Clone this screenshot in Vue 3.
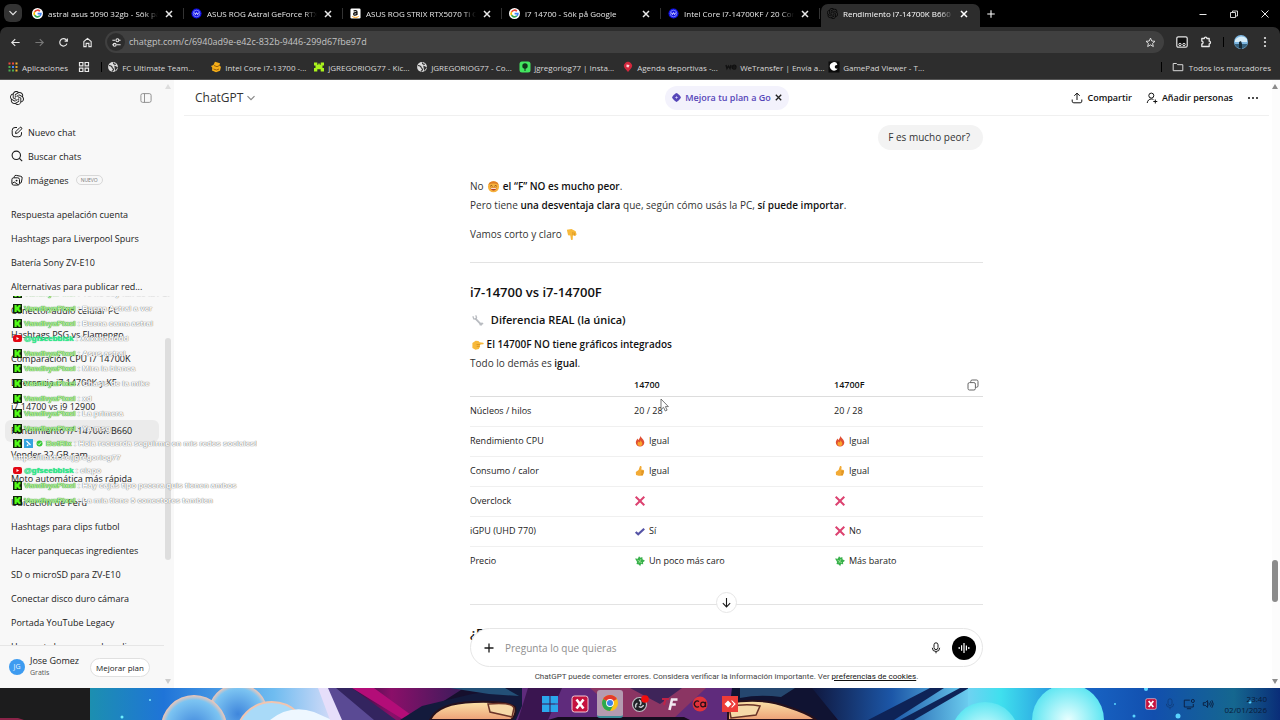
<script setup>
import { ref } from 'vue'

const tabs = [
  { icon: 'google', title: 'astral asus 5090 32gb - Sök på G' },
  { icon: 'webhallen', title: 'ASUS ROG Astral GeForce RTX 5' },
  { icon: 'amazon', title: 'ASUS ROG STRIX RTX5070 Ti OC' },
  { icon: 'google', title: 'i7 14700 - Sök på Google' },
  { icon: 'webhallen', title: 'Intel Core i7-14700KF / 20 Cores' },
  { icon: 'openai', title: 'Rendimiento i7-14700K B660', active: true }
]

const bookmarks = [
  { icon: 'globe', label: 'FC Ultimate Team...' },
  { icon: 'honey', label: 'Intel Core i7-13700 -...' },
  { icon: 'kick', label: 'jGREGORIOG77 - Kic...' },
  { icon: 'globe', label: 'JGREGORIOG77 - Co...' },
  { icon: 'tree', label: 'jgregoriog77 | Insta...' },
  { icon: 'pin', label: 'Agenda deportivas -...' },
  { icon: 'we', label: 'WeTransfer | Envía a...' },
  { icon: 'gamepad', label: 'GamePad Viewer - T...' }
]

const chats = [
  'Respuesta apelación cuenta',
  'Hashtags para Liverpool Spurs',
  'Batería Sony ZV-E10',
  'Alternativas para publicar red...',
  'Conector audio celular PC',
  'Hashtags PSG vs Flamengo',
  'Comparación CPU i7 14700K',
  'Diferencia i7 14700K y KF',
  'i7 14700 vs i9 12900',
  'Rendimiento i7-14700K B660',
  'Vender 32 GB ram',
  'Moto automática más rápida',
  'Ubicación de Perú',
  'Hashtags para clips futbol',
  'Hacer panquecas ingredientes',
  'SD o microSD para ZV-E10',
  'Conectar disco duro cámara',
  'Portada YouTube Legacy',
  'Hogwarts Legacy modo online'
]
const current = 9

const stream = [
  { from: 'kick', name: 'VandhyaPixel', text: 'Yo no soy fan de la PSF' },
  { from: 'kick', name: 'VandhyaPixel', text: 'Buena Astral a ver' },
  { from: 'kick', name: 'VandhyaPixel', text: 'Buena cama astral' },
  { from: 'youtube', name: '@gfseebblsk', text: 'Xxxxdddddd' },
  { from: 'kick', name: 'VandhyaPixel', text: 'Asus astral' },
  { from: 'kick', name: 'VandhyaPixel', text: 'Mira la blanca' },
  { from: 'kick', name: 'VandhyaPixel', text: 'Chasis de la mike' },
  { from: 'kick', name: 'VandhyaPixel', text: 'xd' },
  { from: 'kick', name: 'VandhyaPixel', text: 'La primera' },
  { from: 'kick', name: 'VandhyaPixel', text: 'Ya msg' },
  { from: 'kick', bot: true, name: 'BotRix', text: 'Hola recuerda seguirme en mis redes sociales!' },
  { text: 'https://linktr.ee/jgregoriog77' },
  { from: 'youtube', name: '@gfseebblsk', text: 'elapo' },
  { from: 'kick', name: 'VandhyaPixel', text: 'Hay cajas tipo pecera quis tienen ambos' },
  { from: 'kick', name: 'VandhyaPixel', text: 'La mia tiene 5 conectores tambien' }
]

const rows = [
  { label: 'Núcleos / hilos', a: { text: '20 / 28' }, b: { text: '20 / 28' } },
  { label: 'Rendimiento CPU', a: { icon: 'fire', text: 'Igual' }, b: { icon: 'fire', text: 'Igual' } },
  { label: 'Consumo / calor', a: { icon: 'thumb', text: 'Igual' }, b: { icon: 'thumb', text: 'Igual' } },
  { label: 'Overclock', a: { icon: 'cross' }, b: { icon: 'cross' } },
  { label: 'iGPU (UHD 770)', a: { icon: 'tick', text: 'Sí' }, b: { icon: 'cross', text: 'No' } },
  { label: 'Precio', a: { icon: 'money', text: 'Un poco más caro' }, b: { icon: 'money', text: 'Más barato' } }
]

const apps = ['windows', 'xsplit', 'chrome', 'obs', 'tf', 'ca', 'anydesk']

const address = ref('chatgpt.com/c/6940ad9e-e42c-832b-9446-299d67fbe97d')
const prompt = ref('')
</script>

<template>
  <div class="screen">
    <svg class="sprite" aria-hidden="true">
      <symbol id="google" viewBox="0 0 12 12">
        <circle cx="6" cy="6" r="6" fill="#fff" />
        <g fill="none" stroke-width="1.8">
          <path d="M8.6 3.5A3.7 3.7 0 0 0 2.8 4.2" stroke="#ea4335" />
          <path d="M2.8 4.2a3.7 3.7 0 0 0 0 3.6" stroke="#fbbc05" />
          <path d="M2.8 7.8a3.7 3.7 0 0 0 5.7.9" stroke="#34a853" />
          <path d="M8.5 8.7A3.7 3.7 0 0 0 9.7 6.2H6.1" stroke="#4285f4" />
        </g>
      </symbol>
      <symbol id="webhallen" viewBox="0 0 12 12">
        <circle cx="6" cy="6" r="5.5" fill="#1414e6" />
        <circle cx="6" cy="6" r="3.6" fill="none" stroke="#a9b4ff" stroke-width=".7" />
        <path d="M3.8 5l1 2.2L6 5l1.2 2.2L8.3 5" fill="none" stroke="#fff" stroke-width=".9" />
      </symbol>
      <symbol id="amazon" viewBox="0 0 12 12">
        <rect x=".5" y=".5" width="11" height="11" rx="1.5" fill="#fff" />
        <path d="M4 3.6c.7-1.2 3.6-1.1 3.6.6v3.4M7.5 4.9C5.5 4.9 4 5.2 4 6.6c0 1.7 2.6 1.5 3.5 0" fill="none" stroke="#111" stroke-width="1.4" />
        <path d="M2.5 9.2c2 1.5 5 1.5 7 0" fill="none" stroke="#f90" stroke-width="1" />
      </symbol>
      <symbol id="openai" viewBox="0 0 24 24">
        <path fill="currentColor" d="M22.28 9.82a5.98 5.98 0 0 0-.52-4.91 6.05 6.05 0 0 0-6.51-2.9A6.07 6.07 0 0 0 4.98 4.18a5.98 5.98 0 0 0-4 2.9 6.05 6.05 0 0 0 .74 7.1 5.98 5.98 0 0 0 .51 4.91 6.05 6.05 0 0 0 6.52 2.9A5.98 5.98 0 0 0 13.26 24a6.06 6.06 0 0 0 5.77-4.21 5.99 5.99 0 0 0 4-2.9 6.06 6.06 0 0 0-.75-7.07zm-9.02 12.61a4.48 4.48 0 0 1-2.88-1.04l.14-.08 4.78-2.76a.8.8 0 0 0 .39-.68v-6.74l2.02 1.17a.07.07 0 0 1 .04.05v5.58a4.5 4.5 0 0 1-4.49 4.5zM3.6 18.3a4.47 4.47 0 0 1-.54-3.01l.15.08 4.78 2.76a.77.77 0 0 0 .78 0l5.84-3.37v2.33a.08.08 0 0 1-.03.06L9.74 19.95a4.5 4.5 0 0 1-6.14-1.65zM2.34 7.9a4.49 4.49 0 0 1 2.37-1.97v5.68a.77.77 0 0 0 .39.67l5.81 3.35-2.02 1.17a.08.08 0 0 1-.07 0l-4.83-2.78A4.5 4.5 0 0 1 2.34 7.9zm16.6 3.86l-5.84-3.39 2.02-1.16a.08.08 0 0 1 .07 0l4.83 2.79a4.49 4.49 0 0 1-.68 8.1v-5.68a.79.79 0 0 0-.4-.66zm2.01-3.02l-.14-.09-4.77-2.78a.78.78 0 0 0-.79 0L9.41 9.23V6.9a.07.07 0 0 1 .03-.06l4.83-2.79a4.5 4.5 0 0 1 6.68 4.66zM8.31 12.86l-2.02-1.16a.08.08 0 0 1-.04-.06V6.07a4.5 4.5 0 0 1 7.38-3.45l-.14.08-4.78 2.76a.8.8 0 0 0-.39.68zm1.1-2.37L12 9l2.61 1.5v3L12 15l-2.6-1.5z" />
      </symbol>
      <symbol id="close" viewBox="0 0 10 10"><path d="M2 2l6 6M8 2l-6 6" fill="none" stroke="currentColor" stroke-width="1.5" /></symbol>
      <symbol id="plus" viewBox="0 0 12 12"><path d="M6 1.5v9M1.500 6h9" fill="none" stroke="currentColor" stroke-width="1.3" /></symbol>
      <symbol id="down" viewBox="0 0 10 10"><path d="M1.5 3.2L5 6.7l3.5-3.5" fill="none" stroke="currentColor" stroke-width="1.2" /></symbol>
      <symbol id="min" viewBox="0 0 10 10"><path d="M1.5 5.5h7" stroke="currentColor" /></symbol>
      <symbol id="restore" viewBox="0 0 10 10"><path d="M1.5 3.5h5v5h-5zM3.5 3.5v-1.5h5v5H6.5" fill="none" stroke="currentColor" stroke-width=".9" stroke-linejoin="round" /></symbol>
      <symbol id="quit" viewBox="0 0 10 10"><path d="M1.5 1.5l7 7M8.5 1.5l-7 7" stroke="currentColor" /></symbol>
      <symbol id="back" viewBox="0 0 12 12"><path d="M10.5 6H2M5.7 2.2L1.9 6l3.8 3.8" fill="none" stroke="currentColor" stroke-width="1.2" /></symbol>
      <symbol id="forward" viewBox="0 0 12 12"><path d="M1.5 6H10M6.3 2.2L10.1 6 6.3 9.8" fill="none" stroke="currentColor" stroke-width="1.2" /></symbol>
      <symbol id="reload" viewBox="0 0 12 12"><path d="M9.7 7.2A4 4 0 1 1 8.9 3.2L10 4.4M10.2 1.5v3H7.2" fill="none" stroke="currentColor" stroke-width="1.3" /></symbol>
      <symbol id="home" viewBox="0 0 12 12"><path d="M2 10.5V5L6 1.5 10 5v5.5H7.5v-3.5h-3v3.5z" fill="none" stroke="currentColor" stroke-width="1.2" /></symbol>
      <symbol id="tune" viewBox="0 0 12 12"><path d="M1.5 3.5h3M6 8.5h4.5M8.5 3.5h2M1.5 8.5h2" stroke="currentColor" stroke-width="1.2" /><circle cx="7" cy="3.5" r="1.6" fill="none" stroke="currentColor" stroke-width="1.2" /><circle cx="4" cy="8.5" r="1.6" fill="none" stroke="currentColor" stroke-width="1.2" /></symbol>
      <symbol id="star" viewBox="0 0 12 12"><path d="M6 1.2l1.4 3.2 3.5.3-2.6 2.3.8 3.4L6 8.600l-3.100 1.800.8-3.400L1.100 4.700l3.500-.3z" fill="none" stroke="currentColor" /></symbol>
      <symbol id="mask" viewBox="0 0 12 12"><rect x=".8" y=".8" width="10.4" height="10.4" rx="1.5" fill="#111" stroke="currentColor" stroke-width="1.2" /><circle cx="4" cy="8.500" r="1.200" fill="none" stroke="currentColor" /><circle cx="8" cy="8.500" r="1.200" fill="none" stroke="currentColor" /></symbol>
      <symbol id="puzzle" viewBox="0 0 12 12"><path d="M1.8 2.500h2.500a1.300 1.300 0 0 1 2.600 0h2.300v2.700a1.300 1.300 0 0 1 0 2.600v2.700H1.800V7.800a1.300 1.300 0 0 0 0-2.600z" fill="none" stroke="currentColor" stroke-width="1.3" stroke-linejoin="round" /></symbol>
      <symbol id="avatar" viewBox="0 0 14 14"><circle cx="7" cy="7" r="7" fill="#7db7e2" /><path d="M1 5c3-4 8-5 12-1v3H1z" fill="#d6edf9" /><path d="M.5 9h13a7 7 0 0 1-13 0z" fill="#36617d" /><path d="M5 13V7l2-1 1 3v5z" fill="#162935" /></symbol>
      <symbol id="kebab" viewBox="0 0 12 12"><g fill="currentColor"><circle cx="6" cy="2" r="1.1" /><circle cx="6" cy="6" r="1.1" /><circle cx="6" cy="10" r="1.1" /></g></symbol>
      <symbol id="apps" viewBox="0 0 12 12"><path d="M1.5 1.5h2v2h-2zM5 1.5h2v2H5z" fill="#ef4c3c" /><path d="M8.5 1.5h2v2h-2zM8.5 8.5h2v2h-2z" fill="#f3b32c" /><path d="M1.5 5h2v2h-2zM1.5 8.5h2v2h-2z" fill="#4caf50" /><path d="M5 5h2v2H5z" fill="#448aff" /><path d="M8.5 5h2v2h-2z" fill="#e5a629" /><path d="M5 8.5h2v2H5z" fill="#4caf50" /></symbol>
      <symbol id="grid" viewBox="0 0 12 12"><path d="M1.5 1.5h3.4v3.4H1.5zM7.100 1.5h3.4v3.4H7.100zM1.5 7.100h3.4v3.4H1.5zM7.100 7.100h3.4v3.4H7.100z" fill="none" stroke="currentColor" stroke-width="1.2" /></symbol>
      <symbol id="globe" viewBox="0 0 12 12"><circle cx="6" cy="6" r="4.9" fill="#ddd" /><path d="M2 4.5c2 .2 3 .8 3.2 2 .2 1 1.300.8 1.300 2 0 .9-.9 1.300-1.600 1.900M6.500 1.500c-.2 1.500 1 2 2.300 1.700M8 5.500l2 1-1.500 2z" fill="none" stroke="#333" stroke-width="1.2" /></symbol>
      <symbol id="honey" viewBox="0 0 12 12"><path d="M5 .8l5 1.400-.7 2.500 1.700 1-1 4-4 1.500-4-1.800.3-2.600L1 5l2.400-1z" fill="#f5ae19" /><path d="M4 4.500l3 1.200 2-1M3.500 8l3 1 2.500-1" fill="none" stroke="#9c6108" /></symbol>
      <symbol id="kick" viewBox="0 0 12 12"><path d="M1 1.5h3.300v2.200h1V2.500h1.400v1.200h1V1.500H11v3H9.500v2.600H11v3.400H7.700V8.300H4.300v2.200H1V7.100h1.500V4.500H1z" fill="#a9f21c" /></symbol>
      <symbol id="tree" viewBox="0 0 12 12"><rect x=".5" y=".5" width="11" height="11" rx="2.5" fill="#43e660" /><circle cx="6" cy="5" r="2.7" fill="#10351b" /><path d="M5.500 6.500h1v3.500h-1z" fill="#10351b" /></symbol>
      <symbol id="pin" viewBox="0 0 12 12"><path d="M6 11L3 7.500a4 4 0 1 1 6 0z" fill="#d2283d" /><path d="M4.500 3.500l3 .5-1 2.500-2-.5z" fill="#ffd5db" /></symbol>
      <symbol id="we" viewBox="0 0 12 12"><path d="M1 4l1 3.500L3.500 5 5 7.500 6 4M7 6h4c0-3-4-2-4 .3 0 2 3 2.200 4 .9" fill="none" stroke="#111" stroke-width="1.4" /></symbol>
      <symbol id="gamepad" viewBox="0 0 12 12"><rect x=".5" y=".5" width="11" height="11" fill="#0b0b0b" /><path d="M8.500 1.800a4.300 4.300 0 1 0 1.300 5.700c-1.500.5-3-.1-3-1.500s.9-2.200 2.600-2z" fill="#fff" /></symbol>
      <symbol id="folder" viewBox="0 0 12 12"><path d="M1.200 2.500h3.300l1.200 1.200h5.100v6H1.200z" fill="none" stroke="currentColor" /></symbol>
      <symbol id="panel" viewBox="0 0 12 12"><rect x=".9" y="1.600" width="10.200" height="8.800" rx="1.800" fill="none" stroke="currentColor" stroke-width=".9" /><path d="M4.500 1.600v8.800" stroke="currentColor" stroke-width=".9" /></symbol>
      <symbol id="edit" viewBox="0 0 12 12"><path d="M6 1.500H4A2.800 2.800 0 0 0 1.200 4.300V8A2.800 2.800 0 0 0 4 10.800h3.700A2.800 2.800 0 0 0 10.500 8V6.200M4.500 7.500l.4-2L9 1.400a1.150 1.150 0 0 1 1.600 1.600L6.500 7.100z" fill="none" stroke="currentColor" stroke-linejoin="round" /></symbol>
      <symbol id="search" viewBox="0 0 12 12"><circle cx="5.300" cy="5.300" r="4.200" fill="none" stroke="currentColor" stroke-width="1.100" /><path d="M8.400 8.400l2.800 2.800" stroke="currentColor" stroke-width="1.100" /></symbol>
      <symbol id="images" viewBox="0 0 12 12"><rect x=".9" y="3.800" width="7.600" height="7.300" rx="1.800" fill="none" stroke="currentColor" /><path d="M3 3.700l.3-1A1.700 1.700 0 0 1 5.400 1.400l4.400.9a1.700 1.700 0 0 1 1.300 2.100L10.400 8a1.600 1.600 0 0 1-1.800 1.300M1.200 9.500l2-1.500 4 2.700M6 6.500h.2" fill="none" stroke="currentColor" /><circle cx="5.500" cy="6.600" r=".9" fill="currentColor" /></symbol>
      <symbol id="share" viewBox="0 0 12 12"><path d="M6 8V1.200M3.300 3.800L6 1.100l2.700 2.700M1.200 7.500v1.700a1.600 1.600 0 0 0 1.600 1.600h6.400a1.600 1.600 0 0 0 1.600-1.600V7.500" fill="none" stroke="currentColor" /></symbol>
      <symbol id="person" viewBox="0 0 12 12"><circle cx="5.300" cy="3.600" r="2.500" fill="none" stroke="currentColor" /><path d="M1.200 11c.4-2.600 2-4 4.100-4 .8 0 1.500.2 2.100.5M9.300 7.500v4M7.300 9.500h4" fill="none" stroke="currentColor" /></symbol>
      <symbol id="more" viewBox="0 0 12 12"><g fill="currentColor"><circle cx="2" cy="6" r="1" /><circle cx="6" cy="6" r="1" /><circle cx="10" cy="6" r="1" /></g></symbol>
      <symbol id="gem" viewBox="0 0 12 12"><path d="M6 1.200c1 0 4.800 3.800 4.800 4.800S7 10.800 6 10.800 1.200 7 1.200 6 5 1.200 6 1.200z" fill="#5646b8" /><path d="M6 4l.5 1.500L8 6l-1.500.5L6 8l-.5-1.500L4 6l1.500-.5z" fill="#d8d2ff" /></symbol>
      <symbol id="copy" viewBox="0 0 12 12"><rect x="1" y="3.600" width="7.400" height="7.400" rx="1.500" fill="none" stroke="currentColor" /><path d="M3.700 3.500V2.500A1.500 1.500 0 0 1 5.200 1h4.300A1.500 1.500 0 0 1 11 2.500v4.300a1.500 1.500 0 0 1-1.500 1.500h-1" fill="none" stroke="currentColor" /></symbol>
      <symbol id="arrow" viewBox="0 0 12 12"><path d="M6 1.200v9.400M2 6.800l4 4 4-4" fill="none" stroke="currentColor" stroke-width="1.200" /></symbol>
      <symbol id="mic" viewBox="0 0 12 12"><rect x="4" y=".8" width="4" height="6.800" rx="2" fill="none" stroke="currentColor" /><path d="M2.300 5.800a3.700 3.700 0 0 0 7.400 0M6 9.500v1.800" fill="none" stroke="currentColor" /></symbol>
      <symbol id="wave" viewBox="0 0 12 12"><path d="M1.200 5v2M3.600 3.200v5.600M6 1v10M8.400 3.500v5M10.800 5v2" stroke="currentColor" stroke-width="1.200" /></symbol>

      <symbol id="grin" viewBox="0 0 14 14"><circle cx="7" cy="7.300" r="6" fill="#f6b13c" /><path d="M1.500 5C3 .3 11 .3 12.500 5 9 3.500 5 3.500 1.500 5z" fill="#e07f24" /><path d="M3.500 6.700q1.200-1.400 2.400 0M8.100 6.700q1.200-1.400 2.400 0" fill="none" stroke="#7c3d10" /><path d="M3.800 8.400h6.400q-.5 3-3.200 3t-3.200-3z" fill="#b43c28" /><path d="M4.400 8.600h5.200v1H4.400z" fill="#fff0e0" /></symbol>
      <symbol id="pointdown" viewBox="0 0 14 14"><path d="M2 2l5-.8 4.500 2.300 1 3.500-1.500 1.500-2.500-.7-.2 4.500q-1 1.200-1.900 0L5.700 8 3.300 7.800z" fill="#f7b93b" /><path d="M8.500 4.300v3.500M10.300 5v3" stroke="#d28b1d" stroke-width=".7" /></symbol>
      <symbol id="pointright" viewBox="0 0 14 14"><path d="M1.500 5.500L5 3l3 .1 1.200 1.400 4 .5q1 .9 0 1.700l-3.700.4.3 2-1.400 2.800-3.600.7-3.300-1.800z" fill="#f7b93b" /><path d="M6 7h4M6.200 9h3" stroke="#d28b1d" stroke-width=".8" /></symbol>
      <symbol id="wrench" viewBox="0 0 14 14"><path d="M4.800 5L11 11.500" stroke="#b9bcc1" stroke-width="2" stroke-linecap="round" /><path d="M2 2.500l1 2.800 2.300.2.700-2L5 1.500M9.800 12.200l.2-2 2-.4 1 1.200" fill="none" stroke="#b9bcc1" stroke-width="1.400" /></symbol>
      <symbol id="fire" viewBox="0 0 12 12"><path d="M6.500.8c.2 2 3.800 3.700 3.800 6.900A4 4 0 0 1 6 11.500a4 4 0 0 1-4.200-4c0-2 1.200-3 1.700-4 .4.800.6 1.200 1 1.600.8-1.500 1.800-2.500 2-4.300z" fill="#df4f33" /><path d="M6.500 5c.3 1.500 1.800 2 1.800 3.700C8.300 10.400 7.300 11 6 11s-2.500-.8-2.500-2.200c0-1.100.7-1.700 1.100-2.200.4.500.5.800.9 1C6.100 6.900 6.500 6 6.500 5z" fill="#f9a52c" /></symbol>
      <symbol id="thumb" viewBox="0 0 12 12"><path d="M1.800 7L4.600 5 6 1q1.600-.4 1.600 1.200L7.300 4.600l2.300.3q.9.600.4 1.500.4.900-.2 1.400.2.900-.5 1.300 0 1.400-1 1.700H4.600L2 9.900z" fill="#f2aa35" /><path d="M7.300 6.300h2.300M7.300 7.900h2.100M7.200 9.400h1.800" stroke="#c67b16" stroke-width=".6" /></symbol>
      <symbol id="cross" viewBox="0 0 12 12"><path d="M1.700 1.700l8.600 8.600M10.300 1.700l-8.600 8.600" stroke="#dc4270" stroke-width="2" /></symbol>
      <symbol id="tick" viewBox="0 0 12 12"><path d="M1.700 7l2.500 2.300 6-5.500" fill="none" stroke="#5553a5" stroke-width="2.200" /></symbol>
      <symbol id="money" viewBox="0 0 12 12"><path d="M1 3.500l2.800.2L5 1.200l1.500 1.500L8.300 2l.2 2.200L11 5.800 9 7.200l.2 2L7 9l-.8 2.300L4.800 9.500 2.500 9l.6-2z" fill="#36b04a" /><path d="M3.500 5l4.500 3M7 4L5 7.800" stroke="#a8e59d" stroke-width=".8" /></symbol>

      <symbol id="kickbadge" viewBox="0 0 9 9"><rect width="9" height="9" fill="#10240b" /><path d="M1.500 1h2.200v1.700h.9V1.800h.9V1h2v2.200h-1v2.600h1V8h-2V7h-.9V6.200h-.9V8H1.500z" fill="#53fc18" /></symbol>
      <symbol id="youtubebadge" viewBox="0 0 9 9"><rect y="1" width="9" height="7" rx="2" fill="#e30613" /><path d="M3.500 3v3l2.600-1.500z" fill="#fff" /></symbol>
      <symbol id="modbadge" viewBox="0 0 9 9"><rect width="9" height="9" fill="#35a3df" /><path d="M2.500 2l4 4M3 6.800l1.300-1.300" stroke="#fff" stroke-width="1.200" /></symbol>
      <symbol id="okbadge" viewBox="0 0 9 9"><circle cx="4.500" cy="4.500" r="3" fill="#37c837" /><path d="M3 4.600l1.100 1.100 2-2.400" fill="none" stroke="#fff" stroke-width=".9" /></symbol>

      <symbol id="windows" viewBox="0 0 18 18"><path d="M1 1h7.500v7.500H1zM9.500 1H17v7.500H9.500zM1 9.500h7.500V17H1zM9.500 9.500H17V17H9.500z" fill="#2ba7ec" /></symbol>
      <symbol id="xsplit" viewBox="0 0 18 18"><rect x="1" y="1" width="16" height="16" rx="2.500" fill="#c5123f" stroke="#f2c9d3" /><path d="M5.500 4.500l7 9M12.500 4.500l-7 9" stroke="#fff" stroke-width="2.600" /></symbol>
      <symbol id="chrome" viewBox="0 0 18 18"><circle cx="9" cy="9" r="8" fill="#fbc116" /><path d="M9 9L2.100 5A8 8 0 0 1 15.900 5z" fill="#e33b2e" /><path d="M9 9L2.100 5A8 8 0 0 0 9 17l3.500-6z" fill="#2da94f" /><circle cx="9" cy="9" r="3.900" fill="#fff" /><circle cx="9" cy="9" r="3" fill="#3b82ea" /></symbol>
      <symbol id="obs" viewBox="0 0 18 18"><circle cx="8.500" cy="9.500" r="7" fill="#202126" stroke="#bdbdc4" stroke-width="1.200" /><path d="M8 5a3 3 0 0 1 1 5M12.500 10a3 3 0 0 1-4.700 1.500M5 12.500a3 3 0 0 1 1.400-4.300" fill="none" stroke="#c8c8cf" stroke-width="1.500" /><circle cx="14" cy="4" r="3.800" fill="#f20d0d" /></symbol>
      <symbol id="tf" viewBox="0 0 18 18"><path d="M1 4h7M4.500 4L3 10" stroke="#bf2347" stroke-width="2" /><path d="M8.500 15L11 4.500h5.500M9.800 9.500h5" fill="none" stroke="#f2e9f1" stroke-width="2.600" /></symbol>
      <symbol id="ca" viewBox="0 0 18 18"><circle cx="9" cy="9" r="7.500" fill="#e1333b" /><path d="M8 6.500a3 3 0 1 0 0 5" fill="none" stroke="#281018" stroke-width="1.300" /><circle cx="12" cy="9.500" r="2.300" fill="none" stroke="#281018" stroke-width="1.200" /><path d="M14.600 6.800v5.300" stroke="#281018" stroke-width="1.200" /></symbol>
      <symbol id="anydesk" viewBox="0 0 18 18"><rect x="1" y="1" width="16" height="16" fill="#ee3c38" /><path d="M7 5.500L10.500 9 7 12.500 3.500 9zM10 5.500L11.300 5.500 14.800 9l-3.500 3.500H10L13 9z" fill="#fff" /></symbol>
      <symbol id="network" viewBox="0 0 14 14"><path d="M8 2.500H1.500v8H12V7M4.500 12.500h5" fill="none" stroke="currentColor" /><circle cx="11.500" cy="3.500" r="1.800" fill="none" stroke="currentColor" /></symbol>
      <symbol id="speaker" viewBox="0 0 14 14"><path d="M1.500 5.500h2.300L6.500 3v8L3.800 8.500H1.500zM8 5.300q1.200 1.700 0 3.400M9.800 3.900q2.300 3.100 0 6.200M11.500 2.600q3.300 4.400 0 8.800" fill="none" stroke="currentColor" /></symbol>
    </svg>

    <header class="browser">
      <div class="tabstrip">
        <button class="tabsearch" aria-label="Buscar pestañas"><svg class="i10"><use href="#down" /></svg></button>
        <div v-for="(t, i) in tabs" :key="i" class="tab" :class="{ active: t.active }">
          <svg class="i11"><use :href="'#' + t.icon" /></svg>
          <button class="tabtitle">{{ t.title }}</button>
          <button class="tabclose" aria-label="Cerrar"><svg class="i10"><use href="#close" /></svg></button>
        </div>
        <button class="newtab" aria-label="Nueva pestaña"><svg class="i10"><use href="#plus" /></svg></button>
        <div class="winctl">
          <button aria-label="Minimizar"><svg class="i10"><use href="#min" /></svg></button>
          <button aria-label="Restaurar"><svg class="i10"><use href="#restore" /></svg></button>
          <button aria-label="Cerrar ventana"><svg class="i10"><use href="#quit" /></svg></button>
        </div>
      </div>
      <div class="toolbar">
        <button class="tool" aria-label="Atrás"><svg class="i11"><use href="#back" /></svg></button>
        <button class="tool dim" aria-label="Adelante"><svg class="i11"><use href="#forward" /></svg></button>
        <button class="tool" aria-label="Recargar"><svg class="i11"><use href="#reload" /></svg></button>
        <button class="tool" aria-label="Inicio"><svg class="i11"><use href="#home" /></svg></button>
        <div class="omnibox">
          <button class="site" aria-label="Información del sitio"><svg class="i11"><use href="#tune" /></svg></button>
          <div class="address">
            <input v-model="address" aria-label="Dirección" />
          </div>
          <button class="fav" aria-label="Favorito"><svg class="i11"><use href="#star" /></svg></button>
        </div>
        <button class="tool" aria-label="Extensión"><svg class="i12"><use href="#mask" /></svg></button>
        <button class="tool" aria-label="Extensiones"><svg class="i12"><use href="#puzzle" /></svg></button>
        <span class="rule"></span>
        <button class="tool" aria-label="Perfil"><svg class="i14"><use href="#avatar" /></svg></button>
        <button class="tool" aria-label="Menú"><svg class="i12"><use href="#kebab" /></svg></button>
      </div>
      <nav class="bookmarks">
        <a href="#" class="bm first"><svg class="i12"><use href="#apps" /></svg><span>Aplicaciones</span></a>
        <button class="tool" aria-label="Grupos"><svg class="i12"><use href="#grid" /></svg></button>
        <span class="rule"></span>
        <a v-for="b in bookmarks" :key="b.label" href="#" class="bm site-link"><svg class="i12"><use :href="'#' + b.icon" /></svg><span>{{ b.label }}</span></a>
        <span class="rule last"></span>
        <a href="#" class="bm all"><svg class="i12"><use href="#folder" /></svg><span>Todos los marcadores</span></a>
      </nav>
    </header>

    <div class="page">
      <aside class="side">
        <div class="sidehead">
          <svg class="i14"><use href="#openai" /></svg>
          <button aria-label="Cerrar barra lateral"><svg class="i12"><use href="#panel" /></svg></button>
        </div>
        <nav class="menu">
          <a href="#"><svg class="i12"><use href="#edit" /></svg>Nuevo chat</a>
          <a href="#"><svg class="i12"><use href="#search" /></svg>Buscar chats</a>
          <a href="#"><svg class="i12"><use href="#images" /></svg>Imágenes <span class="new">NUEVO</span></a>
        </nav>
        <nav class="chats">
          <a v-for="(c, i) in chats" :key="c" href="#" :class="{ current: i === current }">{{ c }}</a>
        </nav>
        <div class="account">
          <span class="initials">JG</span>
          <span class="who"><span>Jose Gomez</span><small>Gratis</small></span>
          <button class="upgrade">Mejorar plan</button>
        </div>
        <div class="sidebar-scroll"><i class="up"></i><i class="bar"></i><i class="dn"></i></div>
      </aside>

      <main class="main">
        <div class="topbar">
          <button class="model">ChatGPT <svg class="i10"><use href="#down" /></svg></button>
          <div class="go">
            <svg class="i11"><use href="#gem" /></svg>
            <a href="#">Mejora tu plan a Go</a>
            <button aria-label="Descartar"><svg class="i9"><use href="#close" /></svg></button>
          </div>
          <div class="actions">
            <button><svg class="i12"><use href="#share" /></svg>Compartir</button>
            <button><svg class="i12"><use href="#person" /></svg>Añadir personas</button>
            <button aria-label="Más"><svg class="i12"><use href="#more" /></svg></button>
          </div>
        </div>
        <div class="thread">
          <article class="column">
            <div class="bubble">F es mucho peor?</div>
            <p>No <svg class="emo"><use href="#grin" /></svg> <b>el “F” NO es mucho peor</b>.<br />Pero tiene <b>una desventaja clara</b> que, según cómo usás la PC, <b>sí puede importar</b>.</p>
            <p>Vamos corto y claro <svg class="emo"><use href="#pointdown" /></svg></p>
            <hr />
            <h2>i7-14700 vs i7-14700F</h2>
            <h3><svg class="emo"><use href="#wrench" /></svg> Diferencia REAL (la única)</h3>
            <p class="tight"><svg class="emo"><use href="#pointright" /></svg> <b>El 14700F NO tiene gráficos integrados</b><br />Todo lo demás es <b>igual</b>.</p>
            <div class="tablebox">
              <table>
                <thead>
                  <tr><th class="c1"></th><th class="c2">14700</th><th>14700F</th></tr>
                </thead>
                <tbody>
                  <tr v-for="r in rows" :key="r.label">
                    <td>{{ r.label }}</td>
                    <td v-for="(c, k) in [r.a, r.b]" :key="k"><svg v-if="c.icon" class="mark"><use :href="'#' + c.icon" /></svg>{{ c.text }}</td>
                  </tr>
                </tbody>
              </table>
              <button class="copy" aria-label="Copiar tabla"><svg class="i12"><use href="#copy" /></svg></button>
            </div>
            <hr class="second" />
            <h2>¿En rendimiento?</h2>
          </article>
        </div>
        <div class="dock">
          <button class="tobottom" aria-label="Bajar"><svg class="i11"><use href="#arrow" /></svg></button>
          <form class="composer" @submit.prevent>
            <button type="button" aria-label="Adjuntar"><svg class="i12"><use href="#plus" /></svg></button>
            <input v-model="prompt" placeholder="Pregunta lo que quieras" aria-label="Mensaje" />
            <button type="button" aria-label="Dictar"><svg class="i12"><use href="#mic" /></svg></button>
            <button type="button" class="voice" aria-label="Voz"><svg class="i12"><use href="#wave" /></svg></button>
          </form>
          <div class="note">ChatGPT puede cometer errores. Considera verificar la información importante. Ver <a href="#">preferencias de cookies</a>.</div>
        </div>
      </main>
      <div class="pagescroll"><i class="up"></i><i class="bar"></i><i class="dn"></i></div>

      <div class="stream">
        <div v-for="(m, i) in stream" :key="i" class="msg" :class="{ cont: !m.name }">
          <svg v-if="m.from" class="i9"><use :href="'#' + m.from + 'badge'" /></svg>
          <template v-if="m.bot"><svg class="i9"><use href="#modbadge" /></svg><svg class="i9"><use href="#okbadge" /></svg></template>
          <span v-if="m.name" class="nick" :class="m.from">{{ m.name }}</span><span v-if="m.name">:</span>
          <span>{{ m.text }}</span>
        </div>
      </div>
      <svg class="cursor" viewBox="0 0 9 14"><path d="M1 1v10.500l2.500-2.200 1.800 3.700 1.800-.9L5.400 8.600h3z" fill="#fff" stroke="#555" stroke-width=".8" /></svg>
    </div>

    <footer class="taskbar">
      <svg class="wall" viewBox="0 0 1280 32" preserveAspectRatio="none" aria-hidden="true">
        <defs>
          <linearGradient id="sky" x1="0" x2="1"><stop offset="0" stop-color="#1c8fb0" /><stop offset=".3" stop-color="#1f74d8" /><stop offset=".75" stop-color="#6fbcf0" /><stop offset="1" stop-color="#d7dcf8" /></linearGradient>
          <linearGradient id="mag" x1="0" x2="1"><stop offset="0" stop-color="#2a1140" /><stop offset=".35" stop-color="#8b0f69" /><stop offset="1" stop-color="#3a1c5b" /></linearGradient>
          <linearGradient id="navy" x1="0" x2="1"><stop offset="0" stop-color="#10183f" /><stop offset=".5" stop-color="#1c57a8" /><stop offset="1" stop-color="#6fd2f2" /></linearGradient>
          <linearGradient id="deep" x1="0" x2="1"><stop offset="0" stop-color="#1b6fd0" /><stop offset=".45" stop-color="#124fae" /><stop offset=".8" stop-color="#15678f" /><stop offset="1" stop-color="#0a2d78" /></linearGradient>
          <linearGradient id="skin" x1="0" x2="0" y1="0" y2="1"><stop offset="0" stop-color="#fbe3a8" /><stop offset="1" stop-color="#eda077" /></linearGradient>
          <radialGradient id="orb"><stop offset="0" stop-color="#3f86dc" /><stop offset=".85" stop-color="#7cc4f2" /><stop offset="1" stop-color="#f3c6b4" /></radialGradient>
          <radialGradient id="glow"><stop offset="0" stop-color="#e9ffff" /><stop offset="1" stop-color="#5fe6f2" /></radialGradient>
          <linearGradient id="aqua" x1="0" x2="1"><stop offset="0" stop-color="#6fd2f2" /><stop offset=".4" stop-color="#3fe0ee" /><stop offset="1" stop-color="#2a9fe0" /></linearGradient>
        </defs>
        <rect width="1280" height="32" fill="#160f2d" />
        <rect width="90" height="32" fill="#1c1c1d" />
        <path d="M0 30h18l6 2H0z" fill="#8a2348" />
        <rect x="90" width="245" height="32" fill="url(#sky)" />
        <circle cx="238" cy="26" r="30" fill="url(#orb)" />
        <circle cx="194" cy="40" r="33" fill="url(#orb)" />
        <circle cx="272" cy="50" r="36" fill="#a9daf8" stroke="#f1c5b0" stroke-width="2" />
        <path d="M270 32q20-16 44-8l18 8z" fill="#eef7ff" />
        <circle cx="122" cy="29" r="1.500" fill="#6ff0ff" /><circle cx="150" cy="12" r="1" fill="#7fe8ff" />
        <path d="M322 0h32l60 32h-78z" fill="#5a4a94" />
        <path d="M318 0h10l14 32h-12z" fill="#e6defa" />
        <path d="M336 0h26l56 32h-44z" fill="#33245f" />
        <path d="M352 0h112l-50 32h-18z" fill="url(#mag)" />
        <path d="M352 0h22l44 32h-14z" fill="#b30d78" />
        <path d="M400 32l22-14 50-12 40-6h20l-14 32z" fill="#131a3c" />
        <path d="M450 0h55l14 8-30-2z" fill="#235077" />
        <path d="M430 32q8-17 44-18 34-1 41 5 2 8-4 13z" fill="url(#skin)" stroke="#27111c" stroke-width="2" />
        <path d="M488 16q24-2 26 4l-2 9-22-5z" fill="#f6d9a8" stroke="#6b3428" stroke-width="1.500" />
        <path d="M522 0h211v32H516l6-14z" fill="#5f2b7c" />
        <path d="M528 0h34l-14 32h-30z" fill="#3a1550" />
        <path d="M590 0l36 32h46l34-32z" fill="#8b3563" />
        <path d="M630 0h52l-22 16z" fill="#3e2459" />
        <path d="M558 29h126l6 3H548z" fill="#170c20" />
        <path d="M732 0h90l14 32H728z" fill="#101332" />
        <path d="M728 15q34-6 60 4 22 7 28 13h-88z" fill="url(#skin)" stroke="#27111c" stroke-width="2" />
        <path d="M729 19q16-4 31-1l-4 9-25 3z" fill="#f6d9a8" stroke="#6b3428" stroke-width="1.500" />
        <path d="M740 0h55l-14 9q-22-3-41 1z" fill="#25476f" />
        <path d="M812 0h160v32H838z" fill="url(#navy)" />
        <path d="M868 32L930 0h14l-50 32zM900 32L960 0h9l-55 32z" fill="#0e2357" />
        <rect x="968" width="82" height="32" fill="url(#aqua)" />
        <circle cx="985" cy="48" r="34" fill="url(#glow)" />
        <rect x="1050" width="230" height="32" fill="url(#deep)" />
        <circle cx="1068" cy="32" r="36" fill="url(#glow)" />
        <g fill="#59d4ff"><circle cx="1134" cy="28" r="1.500" /><circle cx="1178" cy="28" r="2.500" /><circle cx="1146" cy="1" r="2" /><circle cx="1115" cy="16" r="1" /><circle cx="1250" cy="14" r="1.500" /></g>
      </svg>
      <div class="apps">
        <button v-for="a in apps" :key="a" :class="{ open: a === 'chrome' }" :aria-label="a"><svg class="i18"><use :href="'#' + a" /></svg></button>
      </div>
      <div class="tray">
        <svg class="i12"><use href="#xsplit" /></svg>
        <svg class="i12 faint"><use href="#mic" /></svg>
        <svg class="i12"><use href="#network" /></svg>
        <svg class="i12"><use href="#speaker" /></svg>
        <div class="clock"><span>23:40</span><span>02/01/2026</span></div>
      </div>
    </footer>
  </div>
</template>

<style>
body { margin: 0; overflow: hidden; }
</style>

<style scoped>
.screen { height: 100vh; display: flex; flex-direction: column; font-family: "Open Sans", "Noto Sans", sans-serif; font-size: 9px; color: #1b1b1b; background: #fff; }
.sprite { position: absolute; width: 0; height: 0; }
* { box-sizing: border-box; }
button, input { font: inherit; color: inherit; background: none; border: 0; padding: 0; margin: 0; outline: none; }
button { display: flex; align-items: center; justify-content: center; }
a { color: inherit; text-decoration: none; }
svg { flex: none; display: block; }
.i9 { width: 9px; height: 9px; }
.i10 { width: 10px; height: 10px; }
.i11 { width: 11px; height: 11px; }
.i12 { width: 12px; height: 12px; }
.i14 { width: 14px; height: 14px; }
.i18 { width: 18px; height: 18px; }

.browser { flex: none; background: #000; color: #e8e8e8; font-size: 8px; }
.tabstrip { display: flex; height: 27px; padding-left: 4px; }
.tabsearch { width: 18px; height: 18px; margin: 4px 4px 0 0; border-radius: 6px; background: #333; }
.tab { position: relative; flex: 0 1 159px; min-width: 0; display: flex; align-items: center; gap: 5px; padding: 0 10px 0 6px; }
.tab:not(.active)::after { content: ""; position: absolute; right: 1px; top: 8px; height: 11px; border-right: 1px solid #333; }
.tab.active { background: #2d2d2d; margin-top: 4px; padding-bottom: 4px; border-radius: 7px 7px 0 0; color: #fff; }
.tab.active .i11 { color: #050505; }
.tabtitle { flex: 1; min-width: 0; justify-content: flex-start; overflow: hidden; white-space: nowrap; mask-image: linear-gradient(to right, #000 88%, transparent); }
.tabclose { width: 12px; height: 12px; }
.newtab { width: 22px; color: #fff; margin-right: auto; }
.winctl { display: flex; }
.winctl button { width: 31px; }
.toolbar { display: flex; align-items: center; height: 30px; padding: 0 3px; background: #2d2d2d; border-radius: 7px 7px 0 0; }
.tool { width: 24px; height: 22px; flex: none; }
.dim { color: #777; }
.omnibox { flex: 1; display: flex; align-items: center; height: 22px; margin: 0 6px; padding: 0 6px 0 2px; background: #404040; border-radius: 11px; }
.site { width: 18px; height: 18px; border-radius: 9px; background: #2d2d2d; }
.address { flex: 1; padding-left: 4px; }
.address input { width: 100%; font-size: 9px; line-height: 16px; color: #c4c4c4; }
.fav { width: 16px; }
.rule { width: 1px; height: 10px; margin: 0 5px; background: #000; flex: none; }
.bookmarks { display: flex; align-items: center; height: 23px; padding: 0 9px 2px 7px; background: #2d2d2d; border-bottom: 1px solid #555; white-space: nowrap; }
.bm { display: flex; align-items: center; gap: 3px; color: #d8d8d8; }
.first { margin-right: 4px; }
.site-link { width: 103px; min-width: 0; margin-left: 0; }
.last { margin-left: auto; }
.all { margin-left: 5px; gap: 5px; }

.page { position: relative; flex: 1; min-height: 0; display: flex; background: #fff; }
.side { position: relative; width: 174px; flex: none; display: flex; flex-direction: column; background: #f8f8f8; }
.sidehead { flex: none; display: flex; align-items: center; justify-content: space-between; height: 35px; padding: 0 22px 0 10px; }
.sidehead button { color: #888; }
.menu { padding-top: 5px; flex: none; }
.menu a { display: flex; align-items: center; gap: 5px; height: 24px; padding-left: 11px; }
.new { margin-left: 2px; padding: 0 4px; border: 1px solid #d8d8d8; border-radius: 6px; font-size: 5px; line-height: 8px; color: #777; }
.chats { flex: 1; min-height: 0; overflow: hidden; padding: 12px 15px 0 5px; }
.chats a { display: block; height: 22px; margin-bottom: 2px; padding-left: 6px; line-height: 22px; border-radius: 6px; white-space: nowrap; }
.current { background: #ebebeb; }
.account { flex: none; display: flex; align-items: center; height: 43px; margin-right: 10px; padding: 0 14px 0 9px; border-top: 1px solid #e6e6e6; }
.initials { width: 16px; height: 16px; border-radius: 8px; background: #3d9bf0; color: #e6f3ff; font-size: 7px; line-height: 16px; text-align: center; }
.who { flex: 1; margin-left: 5px; display: flex; flex-direction: column; line-height: 12px; white-space: nowrap; }
.who small { font-size: 7px; color: #555; }
.upgrade { width: 60px; height: 19px; border: 1px solid #e0e0e0; border-radius: 10px; background: #fff; font-size: 8px; font-weight: 500; white-space: nowrap; }
.sidebar-scroll { position: absolute; top: 0; bottom: 0; right: 3px; width: 6px; }
.up, .dn { position: absolute; left: 0; border: 3px solid transparent; }
.up { top: 1px; border-bottom: 5px solid #ddd; }
.dn { bottom: 1px; border-top: 5px solid #ccc; }
.bar { position: absolute; left: 0; width: 6px; border-radius: 3px; }
.sidebar-scroll .bar { top: 258px; height: 222px; background: #dedede; }
.pagescroll { position: relative; width: 8px; margin-left: 3px; flex: none; background: #fcfcfc; }
.pagescroll .bar { top: 480px; height: 42px; background: #8b8b8b; }
.pagescroll .up { border-bottom-color: #8b8b8b; }
.pagescroll .dn { border-top-color: #8b8b8b; }

.main { position: relative; flex: 1; min-width: 0; padding-left: 10px; display: flex; flex-direction: column; }
.topbar { flex: none; display: grid; grid-template-columns: 1fr auto 1fr; align-items: center; height: 36px; padding: 0 10px 0 11px; border-bottom: 1px solid #f0f0f0; }
.model { justify-self: start; gap: 3px; font-size: 12px; color: #333; }
.model svg { color: #888; }
.go { display: flex; align-items: center; gap: 3px; height: 24px; padding: 0 6px; border-radius: 12px; background: #f3f2fc; color: #5646b8; font-weight: 600; }
.go button { color: #222; }
.actions { justify-self: end; display: flex; gap: 14px; font-weight: 600; color: #111; }
.actions button { gap: 4px; }
.thread { flex: 1; min-height: 0; overflow: hidden; }
.column { max-width: 513px; margin: 0 auto; padding-top: 9px; font-size: 10px; line-height: 19px; color: #333; display: flex; flex-direction: column; }
.bubble { align-self: flex-end; height: 25px; padding: 0 13px 0 10px; margin-bottom: 27px; border-radius: 13px; background: #f3f3f3; line-height: 25px; }
.column p { margin: 0 0 10px; }
.column p.tight { margin-bottom: 1px; }
.column b { font-weight: 600; color: #111; }
.emo { display: inline-block; width: 13px; height: 13px; margin: 0 0 0 1px; vertical-align: -3px; }
hr { width: 100%; margin: 8px 0 19px; border: 0; border-top: 1px solid #e3e3e3; }
hr.second { margin: 28px 0 18px; }
h2 { margin: 0 0 8px; font-size: 13px; line-height: 20px; font-weight: 600; color: #111; }
h3 { margin: 0 0 6px; font-size: 11px; line-height: 19px; font-weight: 600; color: #111; }
h3 .emo { margin-right: 4px; }
.tablebox { position: relative; }
table { width: 100%; border-collapse: collapse; table-layout: fixed; font-size: 9px; line-height: 18px; color: #222; }
th { height: 22px; padding: 0; text-align: left; font-weight: 600; color: #111; border-bottom: 1px solid #ddd; }
.c1 { width: 164px; }
.c2 { width: 200px; }
td { height: 30px; padding: 0; border-bottom: 1px solid #f0f0f0; }
tr:last-child td { border-bottom: 0; }
.mark { display: inline-block; width: 12px; height: 12px; margin-right: 3px; vertical-align: -3px; }
.copy { position: absolute; top: 5px; right: 4px; color: #666; }
.dock { position: absolute; left: 10px; right: 0; bottom: 0; display: flex; flex-direction: column; align-items: center; }
.tobottom { width: 21px; height: 21px; margin-bottom: 15px; border: 1px solid #e6e6e6; border-radius: 50%; background: #fff; }
.composer { display: flex; align-items: center; width: 100%; max-width: 513px; height: 39px; padding: 0 6px 0 12px; border: 1px solid #e6e6e6; border-radius: 20px; background: #fff; }
.composer input { flex: 1; min-width: 0; margin-left: 10px; font-size: 10px; line-height: 18px; color: #222; }
.composer input::placeholder { color: #8f8f8f; opacity: 1; }
.composer .voice { width: 24px; height: 24px; margin-left: 10px; border-radius: 12px; background: #000; color: #fff; }
.note { width: 100%; height: 21px; background: #fff; font-family: Roboto, "Open Sans", sans-serif; font-size: 8px; line-height: 19px; text-align: center; color: #444; }
.note a { color: #111; text-decoration: underline; }

.stream { position: absolute; left: 13px; top: 216px; height: 212px; display: flex; flex-direction: column; justify-content: flex-end; overflow: hidden; font-family: "Liberation Sans", sans-serif; font-size: 8px; font-weight: 700; color: #fff; white-space: nowrap; text-shadow: 0 0 1px #777, 0 0 1px #888; }
.msg { display: flex; align-items: center; gap: 2px; flex: none; height: 15px; }
.msg.cont { height: 12px; }
.nick.kick { color: #b4f0a0; text-shadow: 0 0 1px #2f8d20, 0 0 1px #3f9d30; }
.nick.youtube { color: #2cf08c; text-shadow: 0 0 1px #13a85b; }
.cursor { position: absolute; left: 660px; top: 318px; width: 9px; height: 14px; }

.taskbar { position: relative; flex: none; height: 32px; display: flex; align-items: center; justify-content: center; }
.wall { position: absolute; inset: 0; width: 100%; height: 100%; }
.apps { position: relative; display: flex; gap: 4px; }
.apps button { width: 26px; height: 28px; padding: 0 4px; }
.apps .open { background: #b49bb0; border-radius: 3px; border-bottom: 2px solid #3b8e99; }
.tray { position: absolute; right: 13px; top: 0; height: 32px; display: flex; align-items: center; gap: 7px; color: #0a1a38; }
.faint { opacity: .35; }
.clock { display: flex; flex-direction: column; align-items: flex-end; margin-left: 4px; font-size: 8px; line-height: 11px; }
</style>
